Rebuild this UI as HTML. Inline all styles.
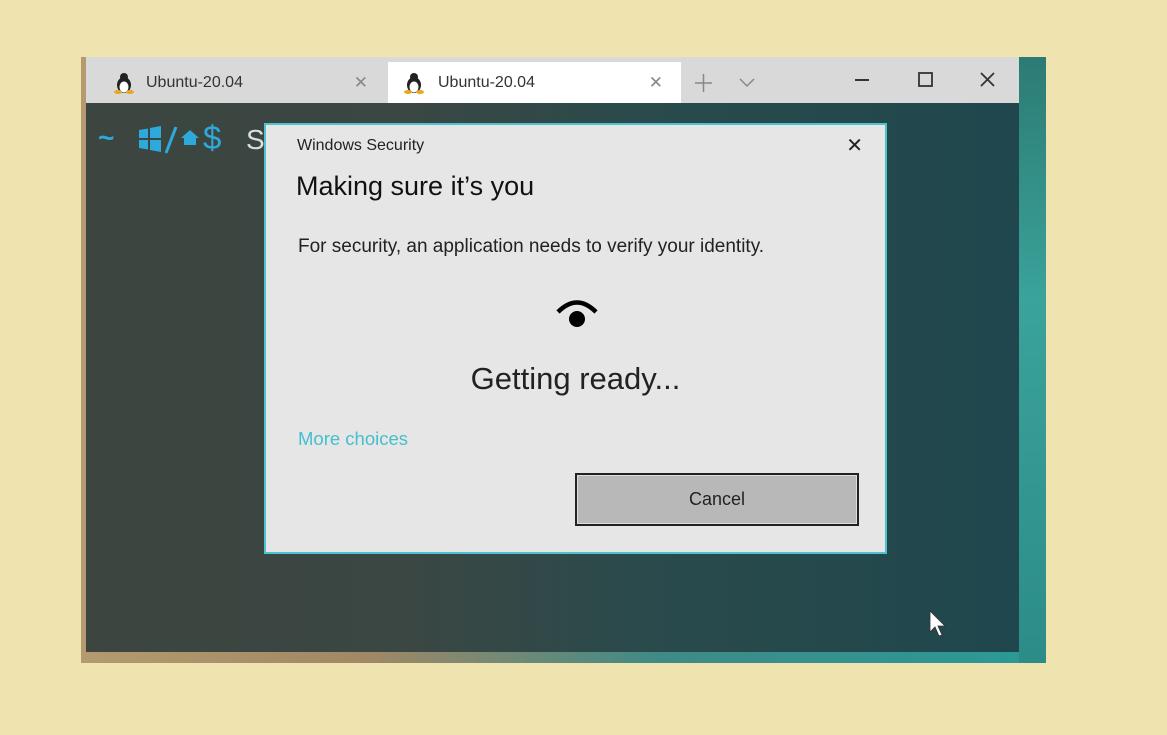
<!DOCTYPE html>
<html><head><style>
*{margin:0;padding:0;box-sizing:border-box}
body{width:1167px;height:735px;background:#efe3b0;position:relative;overflow:hidden;font-family:"Liberation Sans",sans-serif}
.shot{position:absolute;left:81px;top:57px;width:965px;height:606px;background:linear-gradient(90deg,#b49a6e 0,#a08866 30%,#3f8a86 60%,#2a9a98 100%)}
.term{position:absolute;left:86px;top:57px;width:933px;height:595px;background:linear-gradient(90deg,#3c4540 0%,#3a4743 35%,#2a4a4c 60%,#1f474d 100%)}
.rstrip{position:absolute;left:1019px;top:57px;width:27px;height:606px;background:linear-gradient(180deg,#2c7b74,#3aa39a 40%,#2c8c88)}
.tabs{position:absolute;left:86px;top:57px;width:933px;height:46px;background:#d9d9d9}
.tab{position:absolute;top:5px;height:41px;font-size:16px;color:#333;line-height:41px}
.t1{left:0;width:300px}
.t2{left:302px;width:293px;background:#fff}
.tab .lbl{position:absolute;left:58px}
.tab .x{position:absolute;right:18px;top:0;color:#888;font-size:17px;font-weight:300}
.dlg{position:absolute;left:264px;top:123px;width:623px;height:431px;background:#e6e6e6;border:2px solid #4ec2cf}
</style></head><body>
<div class="shot"></div>
<div class="term"></div>
<div class="rstrip"></div>
<div class="tabs">
 <div class="tab t1">
  <svg style="position:absolute;left:28px;top:10px" width="20" height="22" viewBox="0 0 20 22"><ellipse cx="10" cy="13" rx="7" ry="8" fill="#222"/><ellipse cx="10" cy="15" rx="4.5" ry="5.5" fill="#fff"/><ellipse cx="4" cy="20" rx="4" ry="2" fill="#e5a820"/><ellipse cx="16" cy="20" rx="4" ry="2" fill="#e5a820"/><circle cx="10" cy="5" r="4" fill="#222"/></svg>
  <span class="lbl" style="left:60px">Ubuntu-20.04</span><span class="x">✕</span></div>
 <div class="tab t2">
  <svg style="position:absolute;left:16px;top:10px" width="20" height="22" viewBox="0 0 20 22"><ellipse cx="10" cy="13" rx="7" ry="8" fill="#222"/><ellipse cx="10" cy="15" rx="4.5" ry="5.5" fill="#fff"/><ellipse cx="4" cy="20" rx="4" ry="2" fill="#e5a820"/><ellipse cx="16" cy="20" rx="4" ry="2" fill="#e5a820"/><circle cx="10" cy="5" r="4" fill="#222"/></svg>
  <span class="lbl" style="left:50px">Ubuntu-20.04</span><span class="x" style="right:18px">✕</span></div>
 <svg style="position:absolute;left:606px;top:15px" width="70" height="22"><path d="M3 11H20M11.5 2V20" stroke="#888" stroke-width="1.5"/><path d="M48 7L55 14L62 7" stroke="#888" stroke-width="1.5" fill="none"/></svg>
 <svg style="position:absolute;left:765px;top:12px" width="150" height="24"><path d="M4 11H18" stroke="#333" stroke-width="2"/><rect x="68" y="4" width="13" height="13" stroke="#333" stroke-width="1.8" fill="none"/><path d="M130 4L143 17M143 4L130 17" stroke="#333" stroke-width="1.8"/></svg>
</div>
<div style="position:absolute;left:98px;top:122px;font-size:28px;color:#2ea9dc;font-weight:bold">~</div>
<svg style="position:absolute;left:138px;top:126px" width="90" height="30"><path d="M1 4L10 2.5V12H1ZM12 2L23 0V12H12ZM1 14H10V23.5L1 22ZM12 14H23V26L12 24Z" fill="#2ea9dc"/><path d="M28 27L38 1" stroke="#2ea9dc" stroke-width="3"/><path d="M43 12L52 4L61 12H58V19H46V12Z" fill="#2ea9dc"/></svg>
<div style="position:absolute;left:203px;top:119px;font-size:33px;color:#2ea9dc">$</div>
<div style="position:absolute;left:246px;top:124px;font-size:28px;color:#ddd">S</div>
<div class="dlg">
 <div style="position:absolute;left:31px;top:12px;font-size:16px;color:#222">Windows Security</div>
 <div style="position:absolute;right:22px;top:8px;font-size:20px;color:#222">✕</div>
 <div style="position:absolute;left:30px;top:46px;font-size:27px;color:#111">Making sure it’s you</div>
 <div style="position:absolute;left:32px;top:111px;font-size:19px;color:#222">For security, an application needs to verify your identity.</div>
 <svg style="position:absolute;left:288px;top:170px" width="46" height="38"><path d="M4 17Q23 -2 42 17" stroke="#000" stroke-width="4.5" fill="none"/><circle cx="23" cy="24" r="8" fill="#000"/></svg>
 <div style="position:absolute;left:0;width:619px;text-align:center;top:236px;font-size:31px;color:#222">Getting ready...</div>
 <div style="position:absolute;left:32px;top:303px;font-size:18.5px;color:#45bfd0">More choices</div>
 <div style="position:absolute;left:309px;top:348px;width:284px;height:53px;border:2px solid #222;background:#b8b8b8;box-shadow:inset 0 0 0 1px #ddd;text-align:center;line-height:49px;font-size:18px;color:#222">Cancel</div>
</div>
<svg style="position:absolute;left:929px;top:610px" width="18" height="28"><path d="M1 1V22L6 17L10 26L13 25L9 16H16Z" fill="#fff" stroke="#333" stroke-width="0.8"/></svg>
</body></html>
